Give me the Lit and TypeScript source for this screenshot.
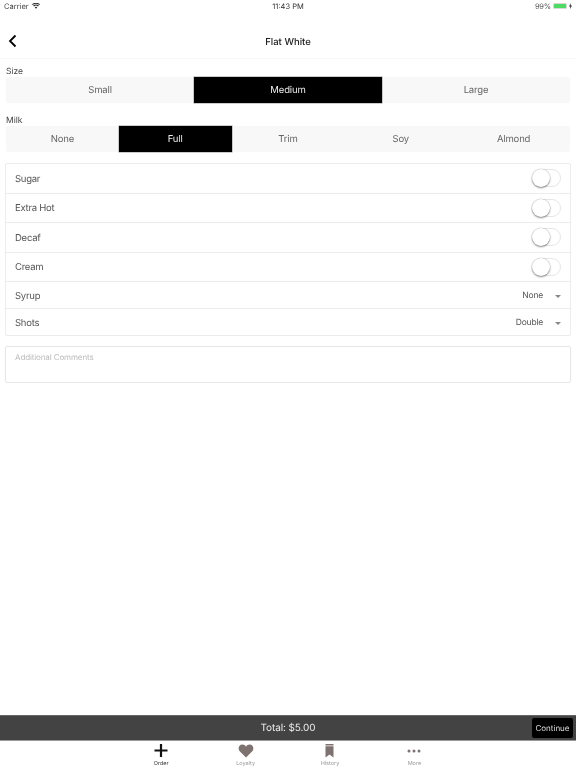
import { LitElement, html, css } from "lit";
import { customElement } from "lit/decorators.js";

@customElement("app-root")
export class AppRoot extends LitElement {
  static styles = css`
    :host { display: flex; flex-direction: column; width: 576px; height: 768px; background: #fff; font-family: Inter, "Liberation Sans", sans-serif; color: #4a4a4a; overflow: hidden; text-rendering: geometricPrecision; will-change: transform; }
    .status { height: 12px; display: grid; grid-template-columns: 1fr auto 1fr; align-items: center; padding: 0 4px; font-size: 7.500px; color: #444; }
    .status .l { display: flex; align-items: center; gap: 3px; }
    .status .r { display: flex; align-items: center; justify-content: flex-end; gap: 2px; color: #555; letter-spacing: -.2px; }
    .time { color: #333; }
    .batt { width: 14px; height: 6px; border-radius: 1.500px; background: #d8d8d8; padding: 1px; box-sizing: border-box; display: block; }
    .batt i { display: block; height: 100%; background: #4cd964; border-radius: .5px; }
    .nav { height: 46px; display: flex; align-items: center; justify-content: center; position: relative; border-bottom: 1px solid #f7f7f7; }
    .nav svg { position: absolute; left: 8px; top: 22px; }
    .title { font-size: 9.500px; font-weight: 500; color: #222; margin-top: 14px; }
    .content { flex: 1; padding: 0 5px 0 6px; display: flex; flex-direction: column; }
    .label { font-size: 8.500px; line-height: 10px; color: #444; }
    .size-label { margin-top: 8px; }
    .milk-label { margin-top: 13px; }
    .seg { display: flex; height: 26px; background: #f8f8f8; border-radius: 2px; width: 564px; }
    .seg div { flex: 1; display: flex; align-items: center; justify-content: center; font-size: 9.500px; letter-spacing: -.15px; color: #666; }
    .seg .on { background: #000; color: #eee; box-shadow: 0 0 0 .5px #999; }
    .list { margin: 11px 0 0 -1px; border: 1px solid #ececec; border-radius: 2px; width: 566px; box-sizing: border-box; }
    .row { display: flex; align-items: center; justify-content: space-between; padding: 0 9px; font-size: 9.500px; letter-spacing: -.25px; color: #555; border-bottom: 1px solid #ececec; box-sizing: border-box; }
    .row > span, .pick { padding-top: 2px; }
    .row:last-child { border-bottom: none; }
    .tall { height: 29.500px; }
    .syrup { height: 27px; }
    .shots { height: 26px; }
    .sw { width: 29px; height: 18px; border-radius: 9px; border: 1px solid #e6e6e6; box-sizing: border-box; position: relative; background: #fff; }
    .knob { position: absolute; left: -1px; top: -1px; width: 18px; height: 18px; border-radius: 50%; background: #fff; box-shadow: 0 1px 2px rgba(0,0,0,.45), 0 0 0 .5px rgba(0,0,0,.12); }
    .pick { display: flex; align-items: center; font-size: 8.500px; letter-spacing: -.2px; color: #555; }
    .arrow { width: 0; height: 0; border-left: 3px solid transparent; border-right: 3px solid transparent; border-top: 3px solid #888; margin-left: 12px; }
    .comments { margin: 10px 0 0 -1px; width: 566px; height: 37px; box-sizing: border-box; border: 1px solid #e6e6e6; border-radius: 2px; padding: 4px 9px; font-size: 8px; letter-spacing: -.12px; line-height: 12px; color: #bbb; }
    .total { height: 26px; box-sizing: border-box; background: #434343; border-top: 1px solid #666; border-bottom: 1px solid #999; display: flex; align-items: center; justify-content: center; position: relative; color: #eee; font-size: 10px; letter-spacing: -.1px; }
    .cont { position: absolute; right: 3px; top: 1.500px; width: 41px; height: 20px; background: #000; border-radius: 2px; color: #ddd; font-size: 8px; letter-spacing: 0; display: flex; align-items: center; justify-content: center; }
    .tabs { height: 27px; display: flex; padding-left: 119px; }
    .tab { width: 84.400px; display: flex; flex-direction: column; align-items: center; font-size: 5.500px; color: #999; }
    .tab.on { color: #333; }
    .tab svg { display: block; height: 20px; }
    .tab span { line-height: 6px; }
  `;

  render() {
    const toggle = html`<div class="sw"><div class="knob"></div></div>`;
    const rows = ["Sugar", "Extra Hot", "Decaf", "Cream"];
    return html`
      <div class="status">
        <div class="l">Carrier
          <svg width="8" height="6" viewBox="0 0 16 12"><path fill="#222" d="M8 11.500 5.600 8.800a3.400 3.400 0 0 1 4.800 0zM3.900 7 2.300 5.200a8 8 0 0 1 11.400 0L12.100 7a5.800 5.800 0 0 0-8.200 0zM1.300 4.200 0 2.800a11.300 11.300 0 0 1 16 0l-1.300 1.400a9.400 9.400 0 0 0-13.400 0z"/></svg>
        </div>
        <div class="time">11:43 PM</div>
        <div class="r">99% <span class="batt"><i></i></span>
          <svg width="3" height="6" viewBox="0 0 3 6"><path fill="#333" d="M1.800 0 0 3.400h1.200L1 6l2-3.600H1.700z"/></svg>
        </div>
      </div>
      <div class="nav">
        <svg width="9" height="14" viewBox="0 0 9 14"><path d="M7.500 1.500 2 7l5.500 5.500" fill="none" stroke="#000" stroke-width="1.800"/></svg>
        <div class="title">Flat White</div>
      </div>
      <div class="content">
        <div class="label size-label">Size</div>
        <div class="seg"><div>Small</div><div class="on">Medium</div><div>Large</div></div>
        <div class="label milk-label">Milk</div>
        <div class="seg"><div>None</div><div class="on">Full</div><div>Trim</div><div>Soy</div><div>Almond</div></div>
        <div class="list">
          ${rows.map((r) => html`<div class="row tall"><span>${r}</span>${toggle}</div>`)}
          <div class="row syrup"><span>Syrup</span><div class="pick">None<i class="arrow"></i></div></div>
          <div class="row shots"><span>Shots</span><div class="pick">Double<i class="arrow"></i></div></div>
        </div>
        <div class="comments">Additional Comments</div>
      </div>
      <div class="total">Total: $5.00<div class="cont">Continue</div></div>
      <div class="tabs">
        <div class="tab on">
          <svg width="14" height="20" viewBox="0 0 14 20"><path d="M7 3v13M0.500 9.500h13" stroke="#111" stroke-width="2.200" fill="none"/></svg>
          <span>Order</span>
        </div>
        <div class="tab">
          <svg width="16" height="20" viewBox="0 0 16 20"><path fill="#7d7270" d="M8 16.500 1.700 10.300C-.4 8.100.7 3.500 4.300 3.500c1.700 0 3 .9 3.700 2.200.7-1.300 2-2.200 3.700-2.200 3.600 0 4.700 4.600 2.600 6.800z"/></svg>
          <span>Loyalty</span>
        </div>
        <div class="tab">
          <svg width="9" height="20" viewBox="0 0 9 20"><path fill="#7d7270" d="M.5 3h8v1.500h-8zM.5 5.200h8V16.500L4.500 13.500.5 16.500z"/></svg>
          <span>History</span>
        </div>
        <div class="tab">
          <svg width="14" height="20" viewBox="0 0 14 20"><g fill="#7d7270"><circle cx="2" cy="10" r="1.500"/><circle cx="7" cy="10" r="1.500"/><circle cx="12" cy="10" r="1.500"/></g></svg>
          <span>More</span>
        </div>
      </div>
    `;
  }
}
